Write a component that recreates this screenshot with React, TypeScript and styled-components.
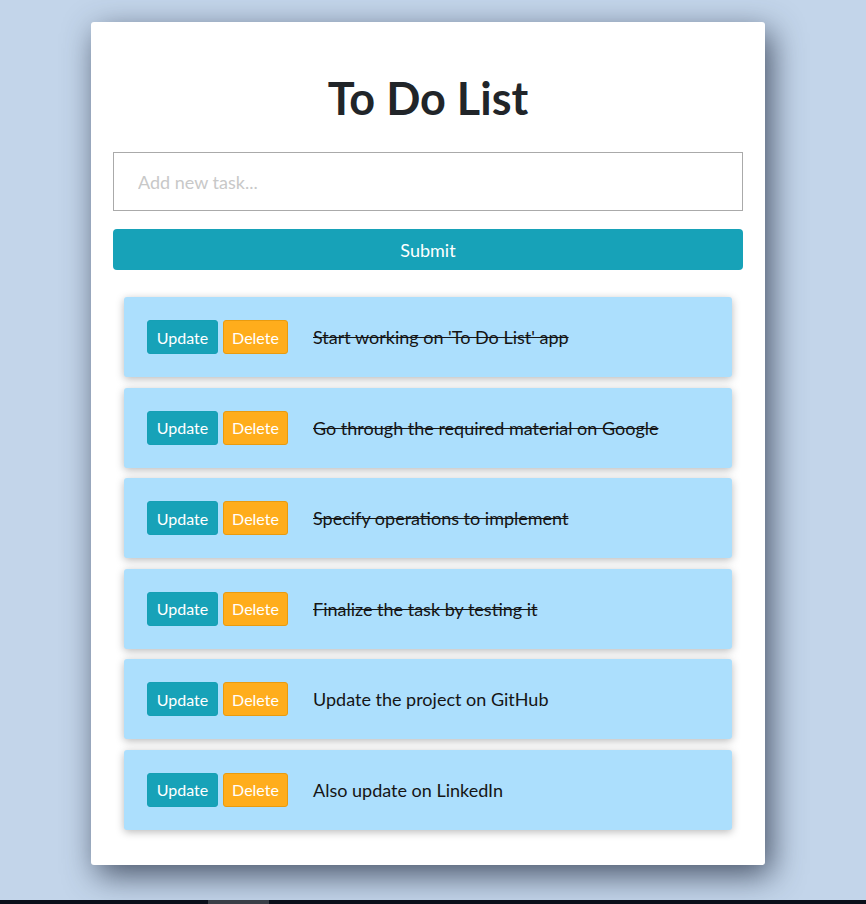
import React, { useState } from 'react'
import styled, { createGlobalStyle } from 'styled-components'

const GlobalStyle = createGlobalStyle`
  body {
    margin: 0;
    background: #c3d5ea;
    font-family: Lato, "Open Sans", sans-serif;
  }
`

const Page = styled.div`
  height: 904px;
  display: flex;
  flex-direction: column;
`

const Main = styled.div`
  flex: 1;
  padding: 22px 0 0 91px;
`

const Taskbar = styled.div`
  height: 4px;
  background: #0a0f1a;
  display: flex;
  padding-left: 208px;
`

const TaskbarItem = styled.div`
  width: 61px;
  background: #3a3f47;
`

const Card = styled.div`
  width: 674px;
  box-sizing: border-box;
  background: #fff;
  border-radius: 3px;
  padding: 48px 22px 35px;
  box-shadow: 6px 10px 32px rgba(40, 50, 70, 0.8);
`

const Title = styled.h1`
  margin: 0 0 26px;
  text-align: center;
  font-size: 45px;
  line-height: 56px;
  font-weight: 700;
  color: #212529;
`

const TaskInput = styled.input`
  display: block;
  width: 100%;
  height: 59px;
  box-sizing: border-box;
  border: 1px solid #aaa;
  padding: 0 24px;
  font-family: inherit;
  font-size: 18px;
  color: #212529;
  outline: none;
  &::placeholder {
    color: #c8c8c8;
  }
`

const SubmitButton = styled.button`
  display: block;
  width: 100%;
  height: 41px;
  margin-top: 18px;
  border: none;
  border-radius: 4px;
  background: #17a2b8;
  color: #fff;
  font-family: inherit;
  font-size: 18px;
  cursor: pointer;
`

const List = styled.ul`
  list-style: none;
  margin: 27px 0 0;
  padding: 0 11px;
  display: flex;
  flex-direction: column;
  gap: 10.6px;
`

const Item = styled.li`
  height: 80px;
  display: flex;
  align-items: center;
  padding-left: 23px;
  background: #acdffd;
  border-radius: 3px;
  box-shadow: 0 2px 8px rgba(0, 0, 0, 0.28);
`

const ActionButton = styled.button<{ $variant: 'update' | 'delete' }>`
  width: ${({ $variant }) => ($variant === 'update' ? '71px' : '65px')};
  height: 34px;
  padding: 0;
  margin-right: 5px;
  border-radius: 3px;
  border: 1px solid ${({ $variant }) => ($variant === 'update' ? '#16a0b5' : '#e99b0f')};
  background: ${({ $variant }) => ($variant === 'update' ? '#17a2b8' : '#ffad1c')};
  color: #fff;
  font-family: inherit;
  font-size: 16px;
  cursor: pointer;
`

const TaskText = styled.span<{ $done: boolean }>`
  margin-left: 20px;
  font-size: 18px;
  color: #151515;
  text-decoration: ${({ $done }) => ($done ? 'line-through' : 'none')};
`

const initialTasks = [
  { text: "Start working on 'To Do List' app", done: true },
  { text: 'Go through the required material on Google', done: true },
  { text: 'Specify operations to implement', done: true },
  { text: 'Finalize the task by testing it', done: true },
  { text: 'Update the project on GitHub', done: false },
  { text: 'Also update on LinkedIn', done: false },
]

const App = () => {
  const [tasks] = useState(initialTasks)

  return (
    <Page>
      <GlobalStyle />
      <Main>
        <Card>
          <Title>To Do List</Title>
          <TaskInput placeholder="Add new task..." />
          <SubmitButton>Submit</SubmitButton>
          <List>
            {tasks.map((task) => (
              <Item key={task.text}>
                <ActionButton $variant="update">Update</ActionButton>
                <ActionButton $variant="delete">Delete</ActionButton>
                <TaskText $done={task.done}>{task.text}</TaskText>
              </Item>
            ))}
          </List>
        </Card>
      </Main>
      <Taskbar>
        <TaskbarItem />
      </Taskbar>
    </Page>
  )
}

export default App
